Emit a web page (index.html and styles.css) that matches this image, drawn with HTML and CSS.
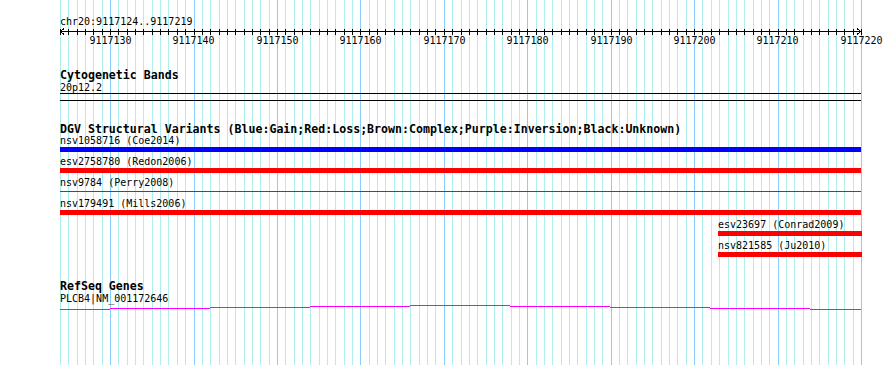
FILE: index.html
```html
<!DOCTYPE html>
<html lang="en">
<head>
<meta charset="UTF-8" />
<title>DGV - chr20:9117124..9117219</title>
<link rel="stylesheet" href="styles.css">
</head>
<body>
  <div class="browser">
    <svg class="grid" id="grid" width="890" height="365" shape-rendering="crispEdges"></svg>

    <div class="ruler">
      <svg id="ruler" width="890" height="50" shape-rendering="crispEdges">
        <text class="ruler-text" x="60" y="25">chr20:9117124..9117219</text>
        <line x1="60" y1="31.5" x2="861" y2="31.5" stroke="#000" />
        <polyline points="64,28.5 60.5,31.5 64,34.5" fill="none" stroke="#000" />
        <polyline points="857,28.5 860.5,31.5 857,34.5" fill="none" stroke="#000" />
        <g id="ticks"></g>
        <text class="ruler-text" x="110.5" y="44" text-anchor="middle">9117130</text>
        <text class="ruler-text" x="193.5" y="44" text-anchor="middle">9117140</text>
        <text class="ruler-text" x="277.5" y="44" text-anchor="middle">9117150</text>
        <text class="ruler-text" x="360.5" y="44" text-anchor="middle">9117160</text>
        <text class="ruler-text" x="444.5" y="44" text-anchor="middle">9117170</text>
        <text class="ruler-text" x="527.5" y="44" text-anchor="middle">9117180</text>
        <text class="ruler-text" x="611.5" y="44" text-anchor="middle">9117190</text>
        <text class="ruler-text" x="694.5" y="44" text-anchor="middle">9117200</text>
        <text class="ruler-text" x="777.5" y="44" text-anchor="middle">9117210</text>
        <text class="ruler-text" x="861.5" y="44" text-anchor="middle">9117220</text>
      </svg>
    </div>

    <section class="track cyto">
      <div class="track-title">Cytogenetic Bands</div>
      <div class="band-label">20p12.2</div>
      <div class="band"></div>
    </section>

    <section class="track dgv">
      <div class="track-title short">DGV Structural Variants (Blue:Gain;Red:Loss;Brown:Complex;Purple:Inversion;Black:Unknown)</div>
      <div class="feature">
        <div class="feature-label">nsv1058716 (Coe2014)</div>
        <div class="bar gain"></div>
      </div>
      <div class="feature">
        <div class="feature-label">esv2758780 (Redon2006)</div>
        <div class="bar loss"></div>
      </div>
      <div class="feature">
        <div class="feature-label">nsv9784 (Perry2008)</div>
        <div class="bar loss thin"></div>
      </div>
      <div class="feature">
        <div class="feature-label">nsv179491 (Mills2006)</div>
        <div class="bar loss"></div>
      </div>
      <div class="feature partial">
        <div class="feature-label">esv23697 (Conrad2009)</div>
        <div class="bar loss"></div>
      </div>
      <div class="feature partial">
        <div class="feature-label">nsv821585 (Ju2010)</div>
        <div class="bar loss"></div>
      </div>
    </section>

    <section class="track refseq">
      <div class="track-title">RefSeq Genes</div>
      <div class="band-label">PLCB4|NM_001172646</div>
      <svg class="gene" width="801" height="8" shape-rendering="crispEdges">
        <rect x="0" y="5" width="50" height="1" />
        <rect x="50" y="4" width="100" height="1" />
        <rect x="150" y="3" width="100" height="1" />
        <rect x="250" y="2" width="100" height="1" />
        <rect x="350" y="1" width="100" height="1" />
        <rect x="450" y="2" width="100" height="1" />
        <rect x="550" y="3" width="100" height="1" />
        <rect x="650" y="4" width="100" height="1" />
        <rect x="750" y="5" width="51" height="1" />
      </svg>
    </section>
  </div>

<script>
  // one grid line / tick per base, 96 bases over 801px
  const svgNS = 'http://www.w3.org/2000/svg';
  const grid = document.getElementById('grid');
  const ticks = document.getElementById('ticks');

  for (let k = 0; k <= 96; k++) {
    const x = Math.floor(60.5 + k * 8.34375) + 0.5;
    const major = (k % 10) === 6;

    const line = document.createElementNS(svgNS, 'line');
    line.setAttribute('x1', x);
    line.setAttribute('x2', x);
    line.setAttribute('y1', 0);
    line.setAttribute('y2', 365);
    line.setAttribute('class', major ? 'grid-major' : 'grid-minor');
    grid.appendChild(line);

    const tick = document.createElementNS(svgNS, 'line');
    tick.setAttribute('x1', x);
    tick.setAttribute('x2', x);
    tick.setAttribute('y1', 29);
    tick.setAttribute('y2', 35);
    tick.setAttribute('stroke', '#000');
    ticks.appendChild(tick);
  }
</script>
</body>
</html>
```

FILE: styles.css
```css
body {
  margin: 0;
  background: #fff;
  color: #000;
  font-family: 'DejaVu Sans Mono', 'Liberation Mono', monospace;
}
.browser {
  position: relative;
  width: 890px;
  height: 365px;
  overflow: hidden;
  background: #fff;
}
.grid {
  position: absolute;
  left: 0;
  top: 0;
}
.grid-minor {
  stroke: #afeeee;
}
.grid-major {
  stroke: #87cefa;
}
.ruler {
  position: relative;
  height: 50px;
}
.ruler svg {
  display: block;
}
.ruler-text {
  font-family: 'DejaVu Sans Mono', 'Liberation Mono', monospace;
  font-size: 10px;
  fill: #000;
}
.track {
  position: relative;
  padding-left: 60px;
}
.track-title {
  font-weight: bold;
  font-size: 11.6px;
  line-height: 14px;
  white-space: nowrap;
}
.track-title.short {
  line-height: 10px;
}
.band-label {
  font-size: 10px;
  line-height: 11px;
  white-space: nowrap;
}
.feature-label {
  font-size: 10px;
  line-height: 13px;
  white-space: nowrap;
}
.cyto {
  margin-top: 18px;
}
.band {
  width: 801px;
  height: 6px;
  border-top: 1px solid #000;
  border-bottom: 1px solid #000;
}
.dgv {
  margin-top: 23px;
}
.feature {
  padding-bottom: 3px;
}
.feature.partial {
  margin-left: 658px;
}
.bar {
  width: 801px;
  height: 5px;
}
.feature.partial .bar {
  width: 144px;
}
.bar.gain {
  background: #0000ff;
}
.bar.loss {
  background: #ff0000;
}
.bar.thin {
  height: 1px;
  margin: 2px 0;
}
.refseq {
  margin-top: 19px;
}
.gene {
  display: block;
  fill: #ff00ff;
}
```
